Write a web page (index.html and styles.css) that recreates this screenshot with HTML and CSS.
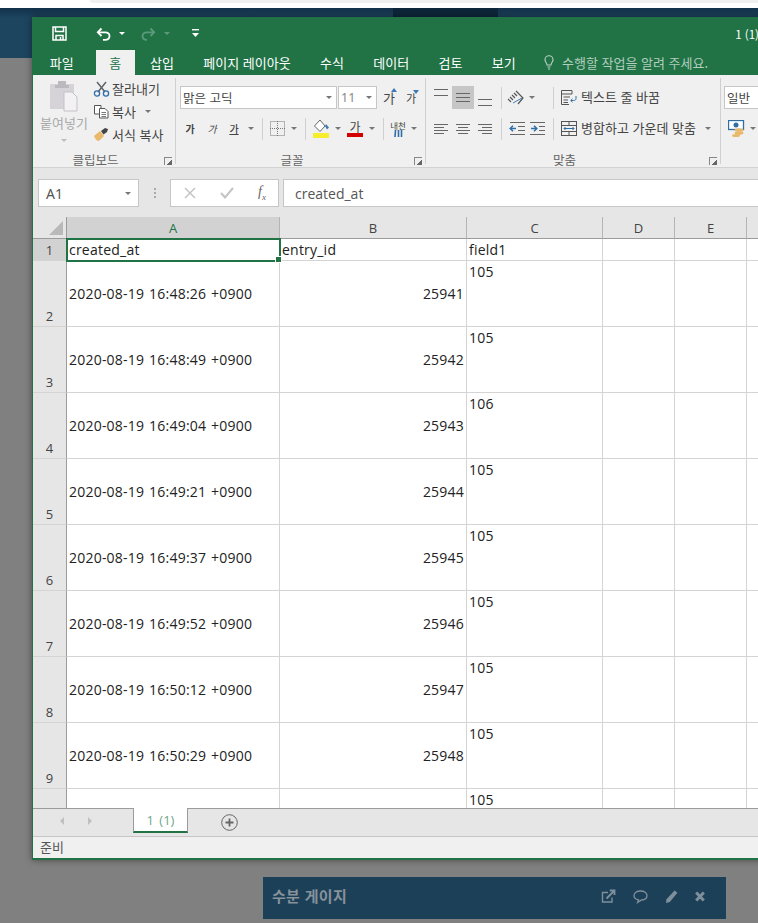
FILE: index.html
```html
<!DOCTYPE html>
<html lang="ko">
<head>
  <meta charset="UTF-8">
  <title>수분 게이지</title>
  <link rel="stylesheet" href="styles.css">
</head>
<body>

  <!-- PAGE BEHIND THE WINDOW -->
  <div class="page-top"><div class="page-search"></div></div>
  <div class="page-bar"><div class="page-bar-dark"></div></div>
  <div class="page-body">
    <div class="gauge-card">
      <span class="gauge-title">수분 게이지</span>
      <div class="gauge-icons">
        <svg width="15" height="15" viewBox="0 0 15 15" fill="none" stroke="#7f8f9b" stroke-width="1.4"><path d="M11 8.5V13H1.5V3.5H7"/><path d="M5.5 9.5 13 2M8.8 1.5H13.5V6" stroke-width="1.8"/></svg>
        <svg width="15" height="15" viewBox="0 0 15 15" fill="none" stroke="#7f8f9b" stroke-width="1.3"><path d="M7.5 2C3.8 2 1 4 1 6.5S3.4 10.5 5.5 10.8L4.6 13.4 8.6 11C11.6 10.8 14 9 14 6.5S11.200 2 7.500 2Z"/></svg>
        <svg width="13" height="15" viewBox="0 0 13 15" fill="#7f8f9b"><path d="M9.600 1.500 12.400 3.800 4.800 13 1 14 1.500 10.300Z"/></svg>
        <svg width="10" height="15" viewBox="0 0 10 15" fill="none" stroke="#7f8f9b" stroke-width="3"><path d="M1.200 3.500 8.800 11.500M8.800 3.500 1.200 11.500"/></svg>
      </div>
    </div>
  </div>

  <!-- EXCEL WINDOW -->
  <div class="excel">

    <div class="titlebar">
      <svg class="qat-save" width="15" height="15" viewBox="0 0 15 15" fill="none" stroke="#fff" stroke-width="1.500"><rect x="1" y="1" width="13" height="13"/><path d="M3.500 1V5.500H11.500V1M4 14V9.500H11V14M8.500 11V14"/></svg>
      <svg class="qat-undo" width="15" height="14" viewBox="0 0 15 14" fill="none" stroke="#fff" stroke-width="1.800"><path d="M5.500 1.500 1.800 5.300 5.500 9"/><path d="M2 5.300H9C12 5.300 13.500 7 13.500 9S12 12.800 9 12.800H7"/></svg>
      <span class="caret caret-white qat-caret"></span>
      <svg class="qat-redo" width="15" height="14" viewBox="0 0 15 14" fill="none" stroke="#5b9a7b" stroke-width="1.800"><path d="M9.500 1.500 13.200 5.300 9.500 9"/><path d="M13 5.300H6C3 5.300 1.500 7 1.500 9S3 12.800 6 12.800"/></svg>
      <span class="caret caret-dim qat-caret"></span>
      <svg class="qat-more" width="7" height="9" viewBox="0 0 7 9" fill="#fff"><rect y="0" width="7" height="1.400"/><path d="M0 4H7L3.500 8Z"/></svg>
      <span class="doc-title">1 (1)</span>
    </div>

    <div class="menubar">
      <span class="menu-tab menu-file">파일</span>
      <span class="menu-tab menu-home">홈</span>
      <span class="menu-tab">삽입</span>
      <span class="menu-tab">페이지 레이아웃</span>
      <span class="menu-tab">수식</span>
      <span class="menu-tab">데이터</span>
      <span class="menu-tab">검토</span>
      <span class="menu-tab">보기</span>
      <span class="tell-me">
        <svg width="10" height="15" viewBox="0 0 10 15" fill="none" stroke="#b9d2c5" stroke-width="1.100"><path d="M3 10C3 8 1 7 1 4.800A4 4 0 0 1 9 4.800C9 7 7 8 7 10Z"/><path d="M3.500 12H6.500M4 14H6"/></svg>
        <span>수행할 작업을 알려 주세요.</span>
      </span>
    </div>

    <div class="ribbon">

      <!-- clipboard -->
      <div class="group group-clip">
        <div class="clip-body">
          <div class="paste">
            <svg width="28" height="31" viewBox="0 0 28 31" fill="#d6d3d8"><rect x="0" y="3" width="24" height="25" rx="1"/><rect x="8" y="0" width="8" height="5" fill="#bcb9be"/><rect x="5" y="4" width="14" height="3" fill="#bcb9be"/><path d="M14 11H22L27 16V30H14Z" fill="#f4f1f5" stroke="#c4c1c6"/></svg>
            <span class="paste-label">붙여넣기</span>
            <span class="caret caret-dim-gray"></span>
          </div>
          <div class="clip-tools">
            <div class="clip-row">
              <svg width="17" height="16" viewBox="0 0 17 16" fill="none"><path d="M4 1 12 11M13 1 5 11" stroke="#5f6468" stroke-width="1.500"/><circle cx="4" cy="12.500" r="2.600" stroke="#2f6fa8" stroke-width="1.300"/><circle cx="13" cy="12.500" r="2.600" stroke="#2f6fa8" stroke-width="1.300"/></svg>
              <span>잘라내기</span>
            </div>
            <div class="clip-row">
              <svg width="17" height="15" viewBox="0 0 17 15" fill="#fff" stroke="#555"><path d="M1.500 1.500H8V10H1.500Z"/><path d="M6.500 4.500H12L15 7.500V14H6.500Z"/><path d="M8.500 8.500H13M8.500 10.500H13M8.500 12.500H13" stroke-width=".8"/></svg>
              <span>복사</span>
              <span class="caret caret-gray clip-caret"></span>
            </div>
            <div class="clip-row">
              <svg width="17" height="15" viewBox="0 0 17 15"><path d="M1 9 7 4 11 9 6 14C4 14 2 12 1 9Z" fill="#e8b96a"/><path d="M8 4 12 1 15 2 14 5 10.500 7.500Z" fill="#444"/></svg>
              <span>서식 복사</span>
            </div>
          </div>
        </div>
        <div class="group-title"><span></span><span class="group-name">클립보드</span><span class="launcher"></span></div>
      </div>

      <!-- font -->
      <div class="group group-font">
        <div class="tool-rows">
          <div class="tool-row font-row-top">
            <div class="select select-font"><span>맑은 고딕</span><span class="caret caret-gray"></span></div>
            <div class="select select-size"><span class="size-value">11</span><span class="caret caret-gray"></span></div>
            <span class="cell w22 glyph glyph-lg">가<i class="mark-up"></i></span>
            <span class="cell w22 glyph glyph-md">가<i class="mark-down"></i></span>
          </div>
          <div class="tool-row">
            <span class="cell w22 glyph glyph-b">가</span>
            <span class="cell w22 glyph glyph-i">가</span>
            <span class="cell w22 glyph glyph-u">가</span>
            <span class="cell w12"><span class="caret caret-gray"></span></span>
            <span class="sep"></span>
            <span class="cell w21">
              <svg width="15" height="15" viewBox="0 0 15 15" fill="none" stroke="#777" stroke-dasharray="1 1"><rect x=".5" y=".5" width="14" height="14"/><path d="M7.500 0V15M0 7.500H15"/></svg>
            </span>
            <span class="cell w12"><span class="caret caret-gray"></span></span>
            <span class="sep"></span>
            <span class="cell w22">
              <svg width="17" height="19" viewBox="0 0 17 19"><path d="M7 1 1.500 7 7 12.500 12 7Z" fill="#fff" stroke="#666"/><path d="M13 5 16 8.500 14 10.500 12 7Z" fill="#3f78b5"/><rect x="0" y="14" width="16" height="5" fill="#f6ee2d"/></svg>
            </span>
            <span class="cell w12"><span class="caret caret-gray"></span></span>
            <span class="cell w22 color-a"><span>가</span><i></i></span>
            <span class="cell w12"><span class="caret caret-gray"></span></span>
            <span class="sep"></span>
            <span class="cell w20 phonetic"><span>내천</span><svg width="9" height="7" viewBox="0 0 9 7" stroke="#2f6fa8" stroke-width="1.600"><path d="M1.500 0 1 7M4.500 0V7M7.500 0V7"/></svg></span>
            <span class="cell w12"><span class="caret caret-gray"></span></span>
          </div>
        </div>
        <div class="group-title"><span></span><span class="group-name">글꼴</span><span class="launcher"></span></div>
      </div>

      <!-- alignment -->
      <div class="group group-align">
        <div class="tool-rows">
          <div class="tool-row">
            <span class="cell w22 lines lines-top"><i></i><i></i></span>
            <span class="cell w22 lines lines-mid cell-on"><i></i><i></i><i></i></span>
            <span class="cell w22 lines lines-bot"><i></i><i></i></span>
            <span class="sep"></span>
            <span class="cell w20">
              <svg width="18" height="18" viewBox="0 0 18 18" fill="none" stroke="#555" stroke-width="1.200"><path d="M1 10 4 13M3 8 6 11M5 6 8 9M7 4 10 7"/><path d="M6 14 15 9" stroke="#3f78b5" stroke-width="1"/><path d="M9 2 16 9 11 15" stroke="#555"/></svg>
            </span>
            <span class="cell w12"><span class="caret caret-gray"></span></span>
            <span class="sep sep-far"></span>
            <span class="cell w22">
              <svg width="16" height="15" viewBox="0 0 16 15" fill="none" stroke="#555"><path d="M.5 .5H11V4H.5ZM.5 4V14.500H8M2.500 7H9M2.500 10H7M2.500 12.500H7"/><path d="M15 6V8.500C15 10 14 10.500 12.500 10.500H10M11.500 8.800 9.700 10.500 11.500 12.200" stroke="#2f6fa8"/></svg>
            </span>
            <span class="tool-text">텍스트 줄 바꿈</span>
          </div>
          <div class="tool-row">
            <span class="cell w22 lines lines-left"><i></i><i></i><i></i><i></i></span>
            <span class="cell w22 lines lines-center"><i></i><i></i><i></i><i></i></span>
            <span class="cell w22 lines lines-right"><i></i><i></i><i></i><i></i></span>
            <span class="sep"></span>
            <span class="cell w21">
              <svg width="16" height="13" viewBox="0 0 16 13" fill="none" stroke="#666"><path d="M1 .5H16M9 4.500H16M9 8.500H16M1 12.500H16"/><path d="M7 6.500H1.500M4 3.800 1.200 6.500 4 9.200" stroke="#2f6fa8" stroke-width="1.500"/></svg>
            </span>
            <span class="cell w21">
              <svg width="16" height="13" viewBox="0 0 16 13" fill="none" stroke="#666"><path d="M0 .5H15M9 4.500H15M9 8.500H15M0 12.500H15"/><path d="M1 6.500H6.500M4 3.800 6.800 6.500 4 9.200" stroke="#2f6fa8" stroke-width="1.500"/></svg>
            </span>
            <span class="sep"></span>
            <span class="cell w22">
              <svg width="16" height="15" viewBox="0 0 16 15" fill="none" stroke="#555"><rect x=".5" y=".5" width="15" height="14"/><path d="M0 4.500H16M0 10.500H16M8 .5V4.500M8 10.500V14.500"/><path d="M3 7.500H13M4.500 6 3 7.500 4.500 9M11.500 6 13 7.500 11.500 9" stroke="#2f6fa8"/></svg>
            </span>
            <span class="tool-text">병합하고 가운데 맞춤</span>
            <span class="caret caret-gray merge-caret"></span>
          </div>
        </div>
        <div class="group-title"><span></span><span class="group-name">맞춤</span><span class="launcher"></span></div>
      </div>

      <!-- number -->
      <div class="group group-number">
        <div class="tool-rows">
          <div class="tool-row">
            <div class="select select-number"><span>일반</span></div>
          </div>
          <div class="tool-row number-row">
            <svg width="17" height="17" viewBox="0 0 17 17"><rect x=".5" y=".5" width="15" height="9" fill="#fff" stroke="#2f6fa8" stroke-width="1.300"/><circle cx="8" cy="5" r="2.500" fill="#2f6fa8"/><ellipse cx="11" cy="10" rx="4.500" ry="1.800" fill="#e8b96a"/><ellipse cx="11" cy="13" rx="4.500" ry="1.800" fill="#e8b96a"/><ellipse cx="8" cy="15.500" rx="4" ry="1.500" fill="#e8b96a"/></svg>
            <span class="caret caret-gray number-caret"></span>
          </div>
        </div>
      </div>
    </div>

    <!-- FORMULA BAR -->
    <div class="formula-bar">
      <div class="name-box"><span>A1</span><span class="caret caret-gray"></span></div>
      <div class="formula-dots"><i></i><i></i><i></i></div>
      <div class="fx-box">
        <svg width="12" height="12" viewBox="0 0 12 12" stroke="#c4c4c4" stroke-width="1.500"><path d="M1 1 11 11M11 1 1 11"/></svg>
        <svg width="14" height="12" viewBox="0 0 14 12" fill="none" stroke="#c4c4c4" stroke-width="2"><path d="M1 6 5 10.500 13 1"/></svg>
        <span class="fx-label">f<sub>x</sub></span>
      </div>
      <div class="formula-input">created_at</div>
    </div>

    <!-- GRID -->
    <div class="sheet">
      <table class="grid">
        <colgroup>
          <col class="col-head"><col class="col-a"><col class="col-b"><col class="col-c"><col class="col-d"><col class="col-e"><col>
        </colgroup>
        <thead>
          <tr>
            <th class="corner"><span class="corner-mark"></span></th>
            <th class="col-on">A</th><th>B</th><th>C</th><th>D</th><th>E</th><th></th>
          </tr>
        </thead>
        <tbody>
          <tr class="row-first">
            <th class="row-on">1</th>
            <td class="cell-selected">created_at<span class="fill-handle"></span></td><td>entry_id</td><td>field1</td><td></td><td></td><td></td>
          </tr>
          <tr><th>2</th><td>2020-08-19 16:48:26 +0900</td><td class="num">25941</td><td class="top">105</td><td></td><td></td><td></td></tr>
          <tr><th>3</th><td>2020-08-19 16:48:49 +0900</td><td class="num">25942</td><td class="top">105</td><td></td><td></td><td></td></tr>
          <tr><th>4</th><td>2020-08-19 16:49:04 +0900</td><td class="num">25943</td><td class="top">106</td><td></td><td></td><td></td></tr>
          <tr><th>5</th><td>2020-08-19 16:49:21 +0900</td><td class="num">25944</td><td class="top">105</td><td></td><td></td><td></td></tr>
          <tr><th>6</th><td>2020-08-19 16:49:37 +0900</td><td class="num">25945</td><td class="top">105</td><td></td><td></td><td></td></tr>
          <tr><th>7</th><td>2020-08-19 16:49:52 +0900</td><td class="num">25946</td><td class="top">105</td><td></td><td></td><td></td></tr>
          <tr><th>8</th><td>2020-08-19 16:50:12 +0900</td><td class="num">25947</td><td class="top">105</td><td></td><td></td><td></td></tr>
          <tr><th>9</th><td>2020-08-19 16:50:29 +0900</td><td class="num">25948</td><td class="top">105</td><td></td><td></td><td></td></tr>
          <tr><th></th><td></td><td></td><td class="top">105</td><td></td><td></td><td></td></tr>
        </tbody>
      </table>
    </div>

    <!-- SHEET TABS -->
    <div class="tabbar">
      <div class="tab-nav">
        <span class="nav-left"></span>
        <span class="nav-right"></span>
      </div>
      <div class="sheet-tab">1 (1)</div>
      <svg class="tab-add" width="17" height="17" viewBox="0 0 17 17" fill="none" stroke="#666"><circle cx="8.500" cy="8.500" r="7.800"/><path d="M8.500 4.500V12.500M4.500 8.500H12.500" stroke-width="1.800"/></svg>
    </div>

    <div class="statusbar">준비</div>
  </div>

</body>
</html>
```

FILE: styles.css
```css
html, body {
  height: 100%;
}

body {
  margin: 0;
  overflow: hidden;
  background-color: #808080;
  font-family: "Noto Sans CJK KR", "Noto Sans", sans-serif;
  color: #444;
}

/* page behind the window */
.page-top {
  height: 8px;
  background-color: #fff;
}

.page-search {
  height: 3px;
  margin-left: 90px;
  background-color: #f0f0f0;
  border-bottom-left-radius: 4px;
}

.page-bar {
  height: 50px;
  background: linear-gradient(#123049, #1d4560 20%);
}

.page-bar-dark {
  width: 105px;
  height: 9px;
  margin-left: 393px;
  background-color: #0e2639;
}

.page-body {
  padding: 819px 0 0 263px;
}

.gauge-card {
  width: 463px;
  height: 42px;
  box-sizing: border-box;
  padding: 0 21px 3px 9px;
  background-color: #1d4059;
  display: flex;
  align-items: center;
}

.gauge-title {
  padding-bottom: 2px;
  font-size: 15px;
  font-weight: 700;
  letter-spacing: 0.3px;
  color: #87929b;
}

.gauge-icons {
  margin-left: auto;
  display: flex;
  align-items: center;
  gap: 17px;
}

/* window */
.excel {
  position: absolute;
  top: 17px;
  left: 32px;
  width: 780px;
  border-left: 1px solid #217346;
  border-bottom: 2px solid #217346;
  box-shadow: 0 0 7px rgba(0, 0, 0, 0.45);
  background-color: #f0f0f0;
}

.titlebar {
  height: 33px;
  box-sizing: border-box;
  padding: 0 54px 0 19px;
  background-color: #217346;
  display: flex;
  align-items: center;
}

.qat-undo { margin-left: 29px; }
.qat-redo { margin-left: 16px; }
.qat-caret { margin-left: 8px; }
.qat-more { margin-left: 22px; }

.doc-title {
  margin-left: auto;
  font-size: 11.5px;
  color: #fff;
}

.menubar {
  height: 25px;
  padding-left: 2px;
  background-color: #217346;
  display: flex;
  align-items: stretch;
  font-size: 13px;
  color: #fff;
}

.menu-tab {
  padding: 0 14.7px;
  line-height: 25px;
  white-space: nowrap;
}

.menu-file { margin-right: 8px; }

.menu-home {
  padding: 0 14px 0 13px;
  background-color: #f0f0f0;
  color: #217346;
}

.tell-me {
  margin-left: 13.5px;
  display: flex;
  align-items: center;
  gap: 8px;
  color: #b0cdbd;
  white-space: nowrap;
}

/* ribbon */
.ribbon {
  height: 93px;
  box-sizing: border-box;
  border-bottom: 1px solid #d2d2d2;
  display: flex;
  font-size: 13px;
}

.group {
  box-sizing: border-box;
  height: 86px;
  margin-top: 3px;
  border-right: 1px solid #d0d0d0;
  display: flex;
  flex-direction: column;
}

.group-clip { width: 143px; }
.group-font { width: 250px; }
.group-align { width: 295px; }
.group-number { flex: 1; border-right: none; }

.group-title {
  height: 18px;
  margin-top: auto;
  margin-bottom: -4px;
  padding-right: 3px;
  display: grid;
  grid-template-columns: 1fr auto 1fr;
  align-items: center;
  font-size: 12.5px;
  color: #666;
}

.group-name {
  margin-right: 14px;
}

.launcher {
  justify-self: end;
  width: 7px;
  height: 7px;
  border-left: 1px solid #888;
  border-top: 1px solid #888;
  margin-top: 3px;
  background: linear-gradient(135deg, transparent 60%, #666 60%);
}

.clip-body {
  display: flex;
  padding-left: 2px;
  margin-top: -1px;
}

.paste {
  width: 58px;
  padding-top: 4px;
  display: flex;
  flex-direction: column;
  align-items: center;
}

.paste-label {
  margin-top: 1px;
  line-height: 19px;
  color: #a8a8a8;
}

.clip-tools {
  display: flex;
  flex-direction: column;
}

.clip-row {
  height: 23px;
  display: flex;
  align-items: center;
  gap: 2px;
  white-space: nowrap;
}

.clip-caret { margin-left: 7px; }

.tool-rows {
  padding-top: 8px;
  display: flex;
  flex-direction: column;
  gap: 8px;
}

.tool-row {
  height: 23px;
  padding-left: 3px;
  display: flex;
  align-items: center;
  white-space: nowrap;
}

.group-align .tool-row { padding-left: 4px; }

.font-row-top { padding-left: 3px; }

.select {
  box-sizing: border-box;
  height: 23px;
  padding: 0 4px 0 2px;
  background-color: #fff;
  border: 1px solid #c6c6c6;
  display: flex;
  align-items: center;
  justify-content: space-between;
  font-size: 12.5px;
}

.select-font { width: 157px; margin-left: 1px; }
.select-size { width: 39px; margin-left: 1px; margin-right: 1px; }
.select-number { width: 60px; }
.size-value { color: #888; font-family: "Noto Sans", sans-serif; }

.number-row { padding-left: 7px; }
.number-caret { margin-left: 5px; }

.cell {
  height: 23px;
  display: inline-flex;
  align-items: center;
  justify-content: center;
  flex: none;
}

.w22 { width: 22px; }
.w21 { width: 21px; }
.w20 { width: 20px; }
.w12 { width: 12px; }

.cell-on {
  background-color: #c6c6c6;
}

.sep {
  width: 10px;
  height: 22px;
  flex: none;
  background: linear-gradient(#d0d0d0, #d0d0d0) center / 1px 100% no-repeat;
}

.sep-far { margin-left: 10px; }

.tool-text {
  margin-left: 1px;
  padding-bottom: 2px;
}

.merge-caret { margin-left: 9px; }

.caret {
  display: inline-block;
  width: 0;
  height: 0;
  border-left: 3px solid transparent;
  border-right: 3px solid transparent;
  border-top: 3px solid #666;
  flex: none;
}

.caret-white { border-top-color: #fff; }
.caret-dim { border-top-color: #5b9a7b; }
.caret-gray { border-top-color: #777; }
.caret-dim-gray { border-top-color: #bdbdbd; margin-top: 7px; }

.glyph {
  position: relative;
  font-size: 10px;
  color: #444;
}

.glyph-lg { font-size: 13px; }
.glyph-md { font-size: 11px; }
.glyph-b { font-weight: 700; }
.glyph-i { font-style: italic; }
.glyph-u { text-decoration: underline; font-weight: 500; }

.mark-up, .mark-down {
  position: absolute;
  right: 3px;
  width: 0;
  height: 0;
  border-left: 3px solid transparent;
  border-right: 3px solid transparent;
}

.mark-up { top: 2px; border-bottom: 4px solid #3f78b5; }
.mark-down { top: 4px; border-top: 4px solid #3f78b5; }

.color-a {
  flex-direction: column;
  font-size: 12px;
  line-height: 13px;
}

.color-a i {
  display: block;
  width: 16px;
  height: 4px;
  background-color: #d40000;
}

.phonetic {
  flex-direction: column;
  font-size: 8.5px;
  line-height: 10px;
}

.lines {
  flex-direction: column;
  gap: 3px;
}

.lines i {
  display: block;
  width: 14px;
  height: 1px;
  background-color: #666;
}

.lines-top { justify-content: flex-start; padding-top: 3px; box-sizing: border-box; gap: 5px; }
.lines-bot { justify-content: flex-end; padding-bottom: 3px; box-sizing: border-box; gap: 5px; }
.lines-left { align-items: flex-start; padding-left: 4px; box-sizing: border-box; }
.lines-right { align-items: flex-end; padding-right: 4px; box-sizing: border-box; }
.lines-left i:nth-child(even),
.lines-center i:nth-child(even),
.lines-right i:nth-child(even) { width: 10px; }
.lines-left, .lines-center, .lines-right { gap: 2px; }

/* formula bar */
.formula-bar {
  height: 39px;
  box-sizing: border-box;
  padding: 11px 0 0 5px;
  background-color: #e6e6e6;
  display: flex;
  align-items: flex-start;
}

.name-box, .fx-box, .formula-input {
  box-sizing: border-box;
  height: 28px;
  background-color: #fff;
  border: 1px solid #c6c6c6;
  display: flex;
  align-items: center;
}

.name-box {
  width: 101px;
  padding: 0 7px;
  justify-content: space-between;
  font-family: "Noto Sans", sans-serif;
  font-size: 14px;
  color: #555;
}

.formula-dots {
  width: 31px;
  height: 28px;
  display: flex;
  flex-direction: column;
  align-items: center;
  justify-content: center;
  gap: 2px;
}

.formula-dots i {
  width: 2px;
  height: 2px;
  background-color: #aaa;
}

.fx-box {
  width: 109px;
  padding: 0 12px 0 13px;
  justify-content: space-between;
}

.fx-label {
  font-family: "Liberation Serif", serif;
  font-style: italic;
  font-size: 14px;
  color: #666;
}

.fx-label sub {
  font-size: 9px;
}

.formula-input {
  flex: 1;
  margin-left: 4px;
  padding-left: 11px;
  font-family: "Open Sans", sans-serif;
  font-size: 14px;
  color: #555;
}

/* sheet */
.sheet {
  height: 601px;
  overflow: hidden;
  background-color: #e6e6e6;
  padding-top: 10px;
  box-sizing: border-box;
}

.grid {
  width: 100%;
  table-layout: fixed;
  border-collapse: separate;
  border-spacing: 0;
  font-family: "Open Sans", sans-serif;
  font-size: 14px;
  color: #222;
}

.col-head { width: 34px; }
.col-a { width: 213px; }
.col-b { width: 187px; }
.col-c { width: 136px; }
.col-d { width: 72px; }
.col-e { width: 72px; }

.grid th {
  box-sizing: border-box;
  padding: 0;
  background-color: #e6e6e6;
  font-weight: 400;
  font-size: 13px;
  color: #444;
}

.grid thead th {
  height: 22px;
  border-right: 1px solid #b4b4b4;
  border-bottom: 1px solid #9b9b9b;
}

.grid thead .corner {
  position: relative;
  border-right: 1px solid #9b9b9b;
}

.corner-mark {
  position: absolute;
  right: 3px;
  bottom: 3px;
  width: 0;
  height: 0;
  border-left: 14px solid transparent;
  border-bottom: 14px solid #b9b9b9;
}

.grid thead .col-on {
  background-color: #d2d2d2;
  color: #217346;
}

.grid tbody th {
  height: 66px;
  vertical-align: bottom;
  line-height: 19px;
  border-right: 1px solid #9b9b9b;
  border-bottom: 1px solid #d4d4d4;
}

.grid td {
  box-sizing: border-box;
  height: 66px;
  padding: 0 1px 0 2px;
  background-color: #fff;
  border-right: 1px solid #d4d4d4;
  border-bottom: 1px solid #d4d4d4;
  white-space: nowrap;
  letter-spacing: 0.22px;
  word-spacing: 1px;
}

.grid .row-first th,
.grid .row-first td {
  height: 22px;
  line-height: 20px;
}

.grid .row-first th.row-on {
  background-color: #d2d2d2;
  vertical-align: middle;
}

.grid td.num { text-align: right; padding-right: 2px; }
.grid td.top { vertical-align: top; line-height: 20px; padding-top: 1px; }

.cell-selected {
  position: relative;
  outline: 2px solid #217346;
  outline-offset: -1px;
}

.fill-handle {
  position: absolute;
  right: -3px;
  bottom: -3px;
  width: 5px;
  height: 5px;
  background-color: #217346;
  border: 1px solid #fff;
}

/* sheet tabs */
.tabbar {
  height: 28px;
  box-sizing: border-box;
  border-top: 1px solid #9b9b9b;
  background-color: #e6e6e6;
  display: flex;
  align-items: flex-start;
}

.tab-nav {
  width: 100px;
  height: 24px;
  display: flex;
  align-items: center;
  padding-left: 27px;
  box-sizing: border-box;
  gap: 24px;
}

.nav-left, .nav-right {
  width: 0;
  height: 0;
  border-top: 4px solid transparent;
  border-bottom: 4px solid transparent;
}

.nav-left { border-right: 4px solid #c0c0c0; }
.nav-right { border-left: 4px solid #c0c0c0; }

.sheet-tab {
  width: 53px;
  height: 23px;
  margin-top: -1px;
  box-sizing: content-box;
  background-color: #fff;
  border-left: 1px solid #9b9b9b;
  border-right: 1px solid #9b9b9b;
  border-bottom: 2px solid #217346;
  text-align: center;
  font-family: "Open Sans", sans-serif;
  font-size: 13px;
  word-spacing: 2px;
  line-height: 24px;
  color: #6fa58a;
}

.tab-add {
  margin: 5px 0 0 33px;
}

.statusbar {
  height: 22px;
  box-sizing: border-box;
  padding-left: 7px;
  border-top: 1px solid #c6c6c6;
  background-color: #f0f0f0;
  font-size: 13px;
  line-height: 20px;
  color: #555;
}
```
